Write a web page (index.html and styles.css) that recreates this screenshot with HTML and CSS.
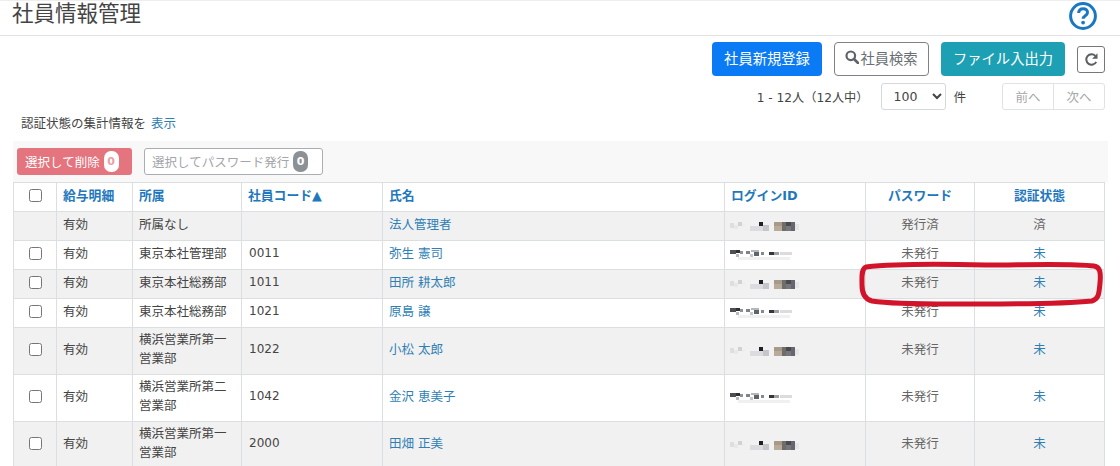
FILE: index.html
```html
<!DOCTYPE html>
<html lang="ja">
<head>
<meta charset="utf-8">
<title>社員情報管理</title>
<link rel="stylesheet" href="styles.css">
</head>
<body>
<svg class="defs" width="0" height="0" aria-hidden="true">
  <symbol id="idA" viewBox="0 0 72 12">
    <rect x="0" y="3" width="4" height="5" fill="#dedede"/><rect x="4" y="5" width="4" height="4" fill="#e8e8e8"/><rect x="8" y="2" width="4" height="4" fill="#d2d2d2"/><rect x="12" y="4" width="3" height="3" fill="#eeeeee"/>
    <rect x="20" y="6" width="14" height="5" fill="#dcdce0"/><rect x="29" y="2" width="4" height="4" fill="#1f1f26"/><rect x="33" y="5" width="6" height="6" fill="#c6c6ca"/>
    <rect x="44" y="2" width="8" height="4" fill="#a89a88"/><rect x="44" y="6" width="8" height="5" fill="#b8ab9a"/><rect x="52" y="2" width="4" height="9" fill="#6f6d6c"/><rect x="56" y="2" width="5" height="4" fill="#4a4a50"/><rect x="56" y="6" width="5" height="5" fill="#77777c"/><rect x="61" y="2" width="4" height="9" fill="#66666c"/><rect x="65" y="4" width="4" height="6" fill="#e6e6e6"/>
  </symbol>
  <symbol id="idB" viewBox="0 0 72 12">
    <rect x="0" y="1" width="6" height="4" fill="#4c4f53"/><rect x="6" y="1" width="4" height="3" fill="#2e3135"/><rect x="10" y="2" width="3" height="3" fill="#8f9195"/><rect x="6" y="5" width="3" height="3" fill="#b8babe"/>
    <rect x="16" y="2" width="4" height="3" fill="#7d8388"/><rect x="20" y="5" width="3" height="3" fill="#c5c8cc"/><rect x="21" y="1" width="8" height="2" fill="#b4b8bc"/><rect x="24" y="3" width="5" height="4" fill="#5f6468"/><rect x="31" y="3" width="3" height="3" fill="#858a8e"/>
    <rect x="39" y="3" width="5" height="3" fill="#33363a"/><rect x="44" y="3" width="5" height="3" fill="#9ea0a4"/><rect x="50" y="3" width="12" height="3" fill="#dcdcde"/><rect x="8" y="8" width="52" height="3" fill="#f0f0f0"/>
  </symbol>
</svg>

<header class="page-head">
  <h1>社員情報管理</h1>
  <svg class="help" width="30" height="30" viewBox="0 0 30 30" aria-label="ヘルプ">
    <circle cx="15" cy="15" r="12.4" fill="none" stroke="#1a78c2" stroke-width="3"/>
    <path d="M10.6 12c.2-2.8 2-4.3 4.6-4.3 2.500 0 4.300 1.500 4.300 3.700 0 3.300-4.300 3.300-4.300 6.300" fill="none" stroke="#1a78c2" stroke-width="3"/>
    <circle cx="15.100" cy="21.600" r="1.900" fill="#1a78c2"/>
  </svg>
</header>

<div class="actions">
  <button class="btn btn-blue">社員新規登録</button>
  <button class="btn btn-outline">
    <svg width="14" height="14" viewBox="0 0 14 14"><circle cx="5.800" cy="5.800" r="4.300" fill="none" stroke="#5f6368" stroke-width="2.200"/><path d="M9 9l4 4" stroke="#5f6368" stroke-width="2.600" stroke-linecap="round"/></svg>社員検索
  </button>
  <button class="btn btn-teal">ファイル入出力</button>
  <button class="btn-reload" aria-label="更新">
    <svg width="15" height="15" viewBox="0 0 14 14"><path d="M11.400 9.200A4.900 4.900 0 1 1 10.600 3.600" fill="none" stroke="#5a5f64" stroke-width="1.900"/><path d="M12.600 1.200v5h-5z" fill="#5a5f64"/></svg>
  </button>
</div>

<div class="paging">
  <span class="count">1 - 12人（12人中）</span>
  <select class="per-page"><option>100</option></select>
  <span class="unit">件</span>
  <div class="pager"><span>前へ</span><span>次へ</span></div>
</div>

<p class="summary">認証状態の集計情報を <a href="#">表示</a></p>

<div class="bulk">
  <button class="bulk-btn bulk-danger">選択して削除<span class="badge badge-white">0</span></button>
  <button class="bulk-btn bulk-muted">選択してパスワード発行<span class="badge badge-gray">0</span></button>
</div>

<div class="table-wrap">
  <table>
    <colgroup>
      <col class="c1"><col class="c2"><col class="c3"><col class="c4"><col class="c5"><col class="c6"><col class="c7"><col class="c8">
    </colgroup>
    <thead>
      <tr>
        <th class="mid"><input type="checkbox"></th>
        <th><a href="#">給与明細</a></th>
        <th><a href="#">所属</a></th>
        <th><a href="#">社員コード▲</a></th>
        <th><a href="#">氏名</a></th>
        <th><a href="#">ログインID</a></th>
        <th class="mid"><a href="#">パスワード</a></th>
        <th class="mid"><a href="#">認証状態</a></th>
      </tr>
    </thead>
    <tbody>
      <tr class="alt">
        <td></td><td>有効</td><td>所属なし</td><td class="num"></td><td><a href="#">法人管理者</a></td>
        <td><svg class="blur"><use href="#idA"/></svg></td><td class="mid gray">発行済</td><td class="mid gray">済</td>
      </tr>
      <tr>
        <td class="mid"><input type="checkbox"></td><td>有効</td><td>東京本社管理部</td><td class="num">0011</td><td><a href="#">弥生 憲司</a></td>
        <td><svg class="blur"><use href="#idB"/></svg></td><td class="mid gray">未発行</td><td class="mid"><a href="#">未</a></td>
      </tr>
      <tr class="alt">
        <td class="mid"><input type="checkbox"></td><td>有効</td><td>東京本社総務部</td><td class="num">1011</td><td><a href="#">田所 耕太郎</a></td>
        <td><svg class="blur"><use href="#idA"/></svg></td><td class="mid gray">未発行</td><td class="mid"><a href="#">未</a></td>
      </tr>
      <tr>
        <td class="mid"><input type="checkbox"></td><td>有効</td><td>東京本社総務部</td><td class="num">1021</td><td><a href="#">原島 譲</a></td>
        <td><svg class="blur"><use href="#idB"/></svg></td><td class="mid gray">未発行</td><td class="mid"><a href="#">未</a></td>
      </tr>
      <tr class="alt">
        <td class="mid"><input type="checkbox"></td><td>有効</td><td>横浜営業所第一営業部</td><td class="num">1022</td><td><a href="#">小松 太郎</a></td>
        <td><svg class="blur"><use href="#idA"/></svg></td><td class="mid gray">未発行</td><td class="mid"><a href="#">未</a></td>
      </tr>
      <tr>
        <td class="mid"><input type="checkbox"></td><td>有効</td><td>横浜営業所第二営業部</td><td class="num">1042</td><td><a href="#">金沢 恵美子</a></td>
        <td><svg class="blur"><use href="#idB"/></svg></td><td class="mid gray">未発行</td><td class="mid"><a href="#">未</a></td>
      </tr>
      <tr class="alt">
        <td class="mid"><input type="checkbox"></td><td>有効</td><td>横浜営業所第一営業部</td><td class="num">2000</td><td><a href="#">田畑 正美</a></td>
        <td><svg class="blur"><use href="#idA"/></svg></td><td class="mid gray">未発行</td><td class="mid"><a href="#">未</a></td>
      </tr>
    </tbody>
  </table>
  <svg class="marker" width="250" height="50" viewBox="0 0 250 50" aria-hidden="true">
    <path d="M10 7C45 3 90 4 130 5c40 0 85-2 108 1 6 1 7 6 6 17-1 10-1 16-8 18-30 3-70 3-110 3-40 0-85 1-110-3C8 39 6 33 6 25 6 17 5 9 10 7z" fill="none" stroke="#d2142a" stroke-width="5" stroke-linejoin="round"/>
  </svg>
</div>
</body>
</html>
```
FILE: styles.css
```css
html, body {
  margin: 0;
  height: 466px;
  overflow: hidden;
  background: #fff;
}
body {
  font-family: "DejaVu Sans", "Noto Sans CJK JP", sans-serif;
  font-size: 12.5px;
  color: #444;
  box-shadow: inset 0 1px 0 #eee;
}
a {
  color: #2f7fb5;
  text-decoration: none;
}
button {
  font-family: inherit;
  cursor: pointer;
}
.defs {
  position: absolute;
}

.page-head {
  height: 35px;
  border-bottom: 1px solid #e2e2e2;
  display: flex;
  justify-content: space-between;
  align-items: flex-start;
  padding: 0 22px 0 12px;
}
.page-head h1 {
  margin: 0;
  font-size: 21.500px;
  font-weight: 400;
  line-height: 28px;
  color: #444;
}
.help {
  margin-top: 1px;
}

.actions {
  display: flex;
  justify-content: flex-end;
  align-items: center;
  gap: 12px;
  margin-top: 6px;
  padding-right: 15px;
  height: 34px;
}
.btn {
  height: 34px;
  padding: 0 0 4px;
  border-radius: 4px;
  border: 1px solid transparent;
  font-size: 14.300px;
  color: #fff;
  display: flex;
  align-items: center;
  justify-content: center;
}
.btn-blue {
  width: 110px;
  background: #0a7bf5;
}
.btn-teal {
  width: 124px;
  background: #1ea0b4;
}
.btn-outline {
  width: 95px;
  gap: 1px;
  background: #fff;
  border-color: #7d8287;
  color: #6a6f74;
}
.btn-reload {
  width: 28px;
  height: 27px;
  padding: 0;
  background: #fff;
  border: 1px solid #777;
  border-radius: 3px;
  display: flex;
  align-items: center;
  justify-content: center;
}

.paging {
  display: flex;
  justify-content: flex-end;
  align-items: center;
  height: 27px;
  margin-top: 7px;
  padding-right: 15px;
  color: #444;
}
.count {
  font-size: 12.2px;
  margin-right: 13px;
}
.per-page {
  width: 65px;
  height: 27px;
  padding: 0 4px 0 7px;
  background: #fff;
  border: 1px solid #d5d8dc;
  border-radius: 3px;
  font-family: inherit;
  font-size: 12.500px;
  color: #444;
}
.unit {
  margin-left: 7px;
  margin-right: 36px;
}
.pager {
  display: flex;
  width: 103px;
  height: 27px;
  border: 1px solid #dfe2e6;
  border-radius: 3px;
  box-sizing: border-box;
  color: #a5a8ac;
}
.pager span {
  flex: 1;
  display: flex;
  align-items: center;
  justify-content: center;
}
.pager span + span {
  border-left: 1px solid #dfe2e6;
}

.summary {
  margin: 5px 0 0;
  padding-left: 21px;
  font-size: 12.5px;
  line-height: 18px;
  color: #444;
}
.summary a {
  margin-left: 1px;
}

.bulk {
  display: flex;
  align-items: center;
  gap: 12px;
  margin: 8px 12px 0 13px;
  padding-left: 4px;
  height: 41px;
  background: #f8f8f9;
}
.bulk-btn {
  height: 27px;
  padding: 0 3px 0 7px;
  border-radius: 3px;
  border: 1px solid transparent;
  font-size: 12.500px;
  display: flex;
  align-items: center;
  gap: 4px;
}
.bulk-danger {
  width: 115px;
  background: #e4747e;
  color: #fff;
}
.bulk-muted {
  width: 179px;
  background: #fff;
  border-color: #a9aeb3;
  color: #a2a6aa;
}
.badge {
  width: 15px;
  height: 21px;
  border-radius: 7px;
  font-size: 11px;
  font-weight: 700;
  display: flex;
  align-items: center;
  justify-content: center;
}
.badge-white {
  background: #fff;
  color: #e8a0a6;
}
.badge-gray {
  background: #8c9196;
  color: #fff;
}

.table-wrap {
  position: relative;
  padding-left: 13px;
}
table {
  width: 1092px;
  table-layout: fixed;
  border-collapse: collapse;
}
.c1 { width: 43px; }
.c2 { width: 76px; }
.c3 { width: 109px; }
.c4 { width: 141px; }
.c5 { width: 342px; }
.c6 { width: 141px; }
.c7 { width: 109px; }
.c8 { width: 130px; }
tr {
  height: 29px;
}
th, td {
  padding: 2px 6px 6px;
  border: 1px solid #dcdfe2;
  line-height: 19px;
  text-align: left;
  vertical-align: middle;
  font-weight: 400;
}
th {
  font-size: 12.8px;
  font-weight: 700;
}
th a {
  color: #1f78bd;
}
th.mid, .mid {
  text-align: center;
}
.alt td {
  background: #f1f1f1;
}
.num {
  font-size: 12px;
  padding-left: 7px;
}
.gray {
  color: #666;
}
input[type="checkbox"] {
  width: 13px;
  height: 13px;
  margin: 0 0 2px;
  vertical-align: middle;
}
.blur {
  display: block;
  width: 72px;
  height: 12px;
  margin-top: 4px;
  margin-left: -1px;
}
.marker {
  position: absolute;
  left: 856px;
  top: 78px;
  pointer-events: none;
}
```
